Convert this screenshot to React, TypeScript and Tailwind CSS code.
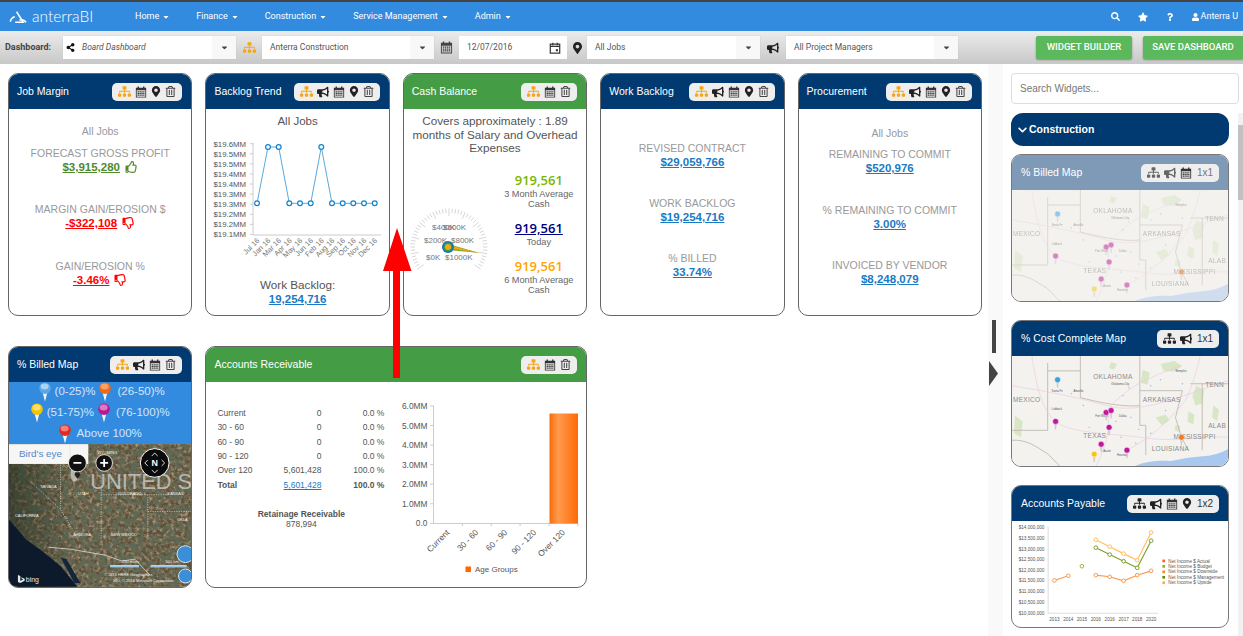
import type { ReactNode } from "react"
import {
  FaBullhorn,
  FaCaretDown,
  FaChevronDown,
  FaMapMarkerAlt,
  FaQuestion,
  FaRegThumbsDown,
  FaRegThumbsUp,
  FaRegTrashAlt,
  FaSearch,
  FaShareAlt,
  FaSitemap,
  FaStar,
  FaUser,
} from "react-icons/fa"

const navItems = ["Home", "Finance", "Construction", "Service Management", "Admin"]

function CalendarGrid({ className = "" }: { className?: string }) {
  return (
    <svg viewBox="0 0 14 14" className={className} fill="currentColor">
      <path d="M1 2h2V0.6h1.6V2h4.8V0.6H11V2h2v11.4H1zM2 5v7.4h10V5z" />
      <path d="M3 6h1.6v1.4H3zM5.2 6h1.6v1.4H5.2zM7.4 6H9v1.4H7.4zM9.6 6h1.4v1.4H9.6zM3 8h1.6v1.4H3zM5.2 8h1.6v1.4H5.2zM7.4 8H9v1.4H7.4zM9.6 8h1.4v1.4H9.6zM3 10h1.6v1.4H3zM5.2 10h1.6v1.4H5.2zM7.4 10H9v1.4H7.4zM9.6 10h1.4v1.4H9.6z" />
    </svg>
  )
}

function Select({ label, width, italic, icon }: { label: string; width: string; italic?: boolean; icon?: ReactNode }) {
  return (
    <div className={`flex h-[23px] items-center bg-white shadow-[0_0_1px_#bbb] ${width}`}>
      <div className={`flex min-w-0 flex-1 items-center gap-[7px] text-[8.5px] text-[#555] ${icon ? "pl-[3px]" : "pl-[8px]"}`}>
        {icon}
        <span className={italic ? "italic" : ""}>{label}</span>
      </div>
      <div className="flex h-full w-[24px] items-center justify-center bg-[#f8f8f8] text-[#444]">
        <FaCaretDown className="h-[9px] w-[9px]" />
      </div>
    </div>
  )
}

function ToolGroup({ tools, faded, children }: { tools: string[]; faded?: boolean; children?: ReactNode }) {
  const color = faded ? "text-[#666]" : "text-[#222]"
  return (
    <div className={`flex h-[18px] items-center gap-[4px] rounded-[5px] bg-[#eeeeee] px-[6px] ${color}`}>
      {tools.map((t) => {
        if (t === "org-orange") return <FaSitemap key={t} className="h-[13px] w-[13px] text-[#f7a516]" />
        if (t === "org") return <FaSitemap key={t} className="h-[13px] w-[13px]" />
        if (t === "horn") return <FaBullhorn key={t} className="h-[12px] w-[12px]" />
        if (t === "cal") return <CalendarGrid key={t} className="h-[12px] w-[12px] text-[#333]" />
        if (t === "pin") return <FaMapMarkerAlt key={t} className="h-[11px] w-[10px]" />
        return <FaRegTrashAlt key={t} className="h-[11px] w-[11px] text-[#444]" />
      })}
      {children}
    </div>
  )
}

function Card({
  title,
  header,
  tools,
  width,
  height,
  children,
  size,
}: {
  title: string
  header: string
  tools: string[]
  width: string
  height: string
  children: ReactNode
  size?: string
}) {
  return (
    <div className={`flex flex-col overflow-hidden rounded-[10px] border border-[#666] bg-white ${width} ${height}`}>
      <div className={`flex h-[35px] shrink-0 items-center justify-between pl-[8px] pr-[9px] text-[10.5px] text-white ${header}`}>
        <span>{title}</span>
        <ToolGroup tools={tools}>{size ? <span className="ml-[1px] text-[10px] text-[#444]">{size}</span> : null}</ToolGroup>
      </div>
      {children}
    </div>
  )
}

function Metric({ label, value, color, thumb, className = "" }: { label: string; value: string; color: string; thumb?: "up" | "down"; className?: string }) {
  return (
    <div className={`flex flex-col items-center text-center ${className}`}>
      <div className="text-[10.5px] leading-[14px] text-[#999]">{label}</div>
      <div className={`flex items-center gap-[5px] text-[11.5px] font-bold leading-[14px] ${color}`}>
        <span className="underline">{value}</span>
        {thumb === "up" && <FaRegThumbsUp className="h-[12px] w-[13px]" />}
        {thumb === "down" && <FaRegThumbsDown className="h-[12px] w-[13px]" />}
      </div>
    </div>
  )
}

function TrendChart() {
  const yLabels = ["$19.6MM", "$19.5MM", "$19.5MM", "$19.4MM", "$19.4MM", "$19.3MM", "$19.3MM", "$19.2MM", "$19.2MM", "$19.1MM"]
  const xLabels = ["Jul 16", "Jan 16", "Mar 16", "Apr 16", "May 16", "Jun 16", "Feb 16", "Aug 16", "Sep 16", "Oct 16", "Nov 16", "Dec 16"]
  const xs = [257, 268, 278.7, 289.3, 300, 310.7, 321.3, 332, 342.7, 353.3, 364, 374.7]
  const high = [1, 2, 6]
  const pts = xs.map((x, i) => ({ x, y: high.includes(i) ? 150 : 206.3 }))
  return (
    <svg viewBox="206 132 183 145" className="h-[145px] w-[183px] shrink-0" fontFamily="Liberation Sans, sans-serif">
      <path d="M253 146V238H381" fill="none" stroke="#ccc" />
      {yLabels.map((l, i) => (
        <text key={i} x="246" y={149.6 + i * 10.08} textAnchor="end" fontSize="7.8" fill="#555">
          {l}
        </text>
      ))}
      {yLabels.map((l, i) => (
        <path key={i} d={`M250 ${146.7 + i * 10.08}h3`} stroke="#ccc" />
      ))}
      <polyline points={pts.map((p) => `${p.x},${p.y}`).join(" ")} fill="none" stroke="#5aa9dc" strokeWidth="1" />
      {pts.map((p, i) => (
        <circle key={i} cx={p.x} cy={p.y} r="2.4" fill="#fff" stroke="#1284cf" strokeWidth="1.2" />
      ))}
      {xLabels.map((l, i) => (
        <text key={i} x={xs[i] + 3} y="244" textAnchor="end" fontSize="7.4" fill="#777" transform={`rotate(-45 ${xs[i] + 3} 244)`}>
          {l}
        </text>
      ))}
    </svg>
  )
}

function Gauge() {
  const ticks = []
  for (let i = 0; i <= 50; i++) {
    const a = ((-215 + (i * 250) / 50) * Math.PI) / 180
    const inner = i % 5 === 0 ? 31 : 34
    ticks.push(
      <line
        key={i}
        x1={449 + Math.cos(a) * inner}
        y1={248 + Math.sin(a) * inner}
        x2={449 + Math.cos(a) * 38.5}
        y2={248 + Math.sin(a) * 38.5}
        stroke="#ccc"
        strokeWidth="0.8"
      />,
    )
  }
  return (
    <svg viewBox="405 205 88 68" className="h-[68px] w-[88px] shrink-0" fontFamily="Liberation Sans, sans-serif" fontSize="8" fill="#777">
      {ticks}
      <text x="432" y="231">$400K</text>
      <text x="443" y="231">$600K</text>
      <text x="424" y="244">$200K</text>
      <text x="451" y="244">$800K</text>
      <text x="426" y="261">$0K</text>
      <text x="445" y="261">$1000K</text>
      <polygon points="448,245 480,254 448,251" fill="#7ea82a" />
      <polygon points="448,246 480,254 448,249" fill="#f7a516" />
      <circle cx="448" cy="248" r="6" fill="#0f75b8" />
      <circle cx="448" cy="248" r="4.4" fill="#3f9e4a" />
      <circle cx="448" cy="248" r="3" fill="#f7a516" />
    </svg>
  )
}

function Pin({ color, light, size = 1 }: { color: string; light: string; size?: number }) {
  return (
    <svg viewBox="0 0 12 20" style={{ width: 12 * size, height: 20 * size }} className="shrink-0">
      <path d="M3.6 10.5L6 19.5l2.4-9z" fill="#f4f4f4" />
      <circle cx="6" cy="6.2" r="5.8" fill={color} />
      <ellipse cx="5.6" cy="4.6" rx="4" ry="3" fill={light} />
    </svg>
  )
}

function MapPin({ x, y, color, opacity }: { x: number; y: number; color: string; opacity: number }) {
  return (
    <g opacity={opacity}>
      <path d={`M${x - 1} ${y + 2}L${x} ${y + 8}l1-6z`} fill="#ddd" stroke="#999" strokeWidth="0.3" />
      <circle cx={x} cy={y} r="3" fill={color} stroke="#fff" strokeWidth="0.5" />
    </g>
  )
}

function RoadMap({ faded }: { faded?: boolean }) {
  const o = faded ? 0.5 : 1
  const pins: [number, number, string][] = [
    [46, 24, "#3aa0e0"],
    [95, 57, "#c0189a"],
    [100, 55, "#c0189a"],
    [44, 66, "#c0189a"],
    [98, 72, "#c0189a"],
    [90, 89, "#c0189a"],
    [116, 95, "#c0189a"],
    [83, 99, "#f5c518"],
    [171, 82, "#f5791f"],
  ]
  const labels: [string, number, number][] = [
    ["OKLAHOMA", 82, 23],
    ["MEXICO", 1, 46],
    ["ARKANSAS", 132, 46],
    ["TEXAS", 72, 83],
    ["LOUISIANA", 141, 96],
    ["MISSISSIPPI", 163, 84],
    ["TENN", 195, 31],
    ["ALAB", 198, 73],
  ]
  return (
    <svg viewBox="0 0 218 111" className="h-[111px] w-full" preserveAspectRatio="none" fontFamily="Liberation Sans, sans-serif">
      <rect width="218" height="111" fill="#f4f2ee" />
      <g opacity={o}>
        <g fill="#d8e6c6">
          <path d="M150 8l14-3 8 5-9 6-10-1z" />
          <path d="M186 30l8 4-2 14-7 2-3-10z" />
          <path d="M145 62l10-3 4 6-8 5z" />
          <path d="M3 60l8 6-2 16-7-4z" />
          <path d="M132 14l7 3-2 12-7-2z" />
          <path d="M178 56l6 3-1 10-6-3z" />
          <path d="M203 50l6 4-2 12-5-4z" />
          <path d="M100 6l6 2-3 6-5-2z" />
          <path d="M165 70l5 1-1 6-5-2z" />
        </g>
        <path d="M124 111C135 106 150 105 160 106C172 104 180 102 195 101C205 100 212 97 218 94V111z" fill="#a9c8f0" />
        <g fill="none" stroke="#bdb9b0" strokeWidth="0.9">
          <path d="M36 7V75H0" />
          <path d="M36 15H69V42C85 46 110 52 129 50" />
          <path d="M129 0V50" />
          <path d="M69 0V15" />
          <path d="M129 50V70H135V100" />
          <path d="M129 35H172L165 62L171 82L178 95" />
          <path d="M180 28H218" />
          <path d="M192 28V95" />
          <path d="M0 85C15 84 25 92 35 98C42 104 45 108 48 111" />
        </g>
        <g fill="none" stroke="#e8c8e4" strokeWidth="0.6">
          <path d="M0 30C30 35 60 40 95 50C130 60 170 40 218 25" />
          <path d="M96 55C100 75 95 90 85 111" />
          <path d="M20 0C25 30 30 60 50 70C70 78 95 78 130 82C165 88 190 80 218 82" />
          <path d="M100 50C120 30 130 25 170 10" />
          <path d="M116 95C135 85 150 75 175 45C180 35 185 20 190 0" />
        </g>
        <g fill="#8fbce8">
          {[[60, 38], [72, 50], [112, 40], [120, 62], [128, 74], [140, 30], [110, 82], [155, 55], [172, 28], [78, 72], [105, 66], [125, 88], [140, 78], [118, 32], [150, 24]].map(([x, y]) => (
            <circle key={`${x}-${y}`} cx={x} cy={y} r="0.7" />
          ))}
        </g>
        {labels.map(([l, x, y]) => (
          <text key={l} x={x} y={y} fontSize="6.6" letterSpacing="0.3" fill="#8a8a8a">
            {l}
          </text>
        ))}
        <g fontSize="2.8" fill="#555">
          <text x="40" y="36">Santa Fe</text>
          <text x="62" y="36">Amarillo</text>
          <text x="40" y="55">Lubbock</text>
          <text x="84" y="62">Fort Worth</text>
          <text x="108" y="62">Dallas</text>
          <text x="106" y="101">Houston</text>
          <text x="92" y="97">Austin</text>
          <text x="100" y="29">Oklahoma City</text>
          <text x="165" y="16">Memphis</text>
        </g>
      </g>
      {pins.map(([x, y, c], i) => (
        <MapPin key={i} x={x} y={y} color={c} opacity={faded ? 0.5 : 1} />
      ))}
    </svg>
  )
}

function SatelliteMap() {
  return (
    <svg viewBox="8 444 184 144" className="h-[144px] w-full" fontFamily="Liberation Sans, sans-serif">
      <defs>
        <filter id="terrain" x="0" y="0" width="100%" height="100%">
          <feTurbulence type="fractalNoise" baseFrequency="0.28" numOctaves="3" seed="7" />
          <feColorMatrix values="0 0 0 0 0.62  0 0 0 0 0.52  0 0 0 0 0.36  1.6 0 0 0 -0.62" />
        </filter>
        <filter id="forest" x="0" y="0" width="100%" height="100%">
          <feTurbulence type="fractalNoise" baseFrequency="0.16" numOctaves="4" seed="21" />
          <feColorMatrix values="0 0 0 0 0.11  0 0 0 0 0.14  0 0 0 0 0.09  0 3.6 0 0 -1.45" />
        </filter>
        <linearGradient id="haze" x1="0" x2="1" y1="0" y2="0">
          <stop offset="0" stopColor="#1f2a1c" stopOpacity="0.6" />
          <stop offset="0.35" stopColor="#1f2a1c" stopOpacity="0" />
        </linearGradient>
      </defs>
      <rect x="8" y="444" width="184" height="144" fill="#5e5039" />
      <rect x="8" y="444" width="184" height="144" filter="url(#terrain)" />
      <rect x="8" y="444" width="184" height="144" filter="url(#forest)" />
      <rect x="8" y="444" width="184" height="144" fill="url(#haze)" />
      <polygon points="8,520 25,540 43,553 60,567 77,588 8,588" fill="#0d1a2b" />
      <polygon points="60,558 66,560 80,584 74,584" fill="#14273a" />
      <ellipse cx="74" cy="474" rx="4" ry="8" fill="#d8d8d0" opacity="0.7" />
      <g fill="none" stroke="#e8e8e0" strokeWidth="0.6" strokeDasharray="1.2 1.2">
        <path d="M60 460V510L78 540" />
        <path d="M101 478V540" />
        <path d="M101 495H170" />
        <path d="M148 495V540" />
        <path d="M148 512H192" />
        <path d="M30 482L60 510" />
      </g>
      <path d="M48 548L70 550L105 556L122 562L135 560L150 576" fill="none" stroke="#cfcfc8" strokeWidth="0.9" />
      <text x="90" y="489" fontSize="22" fill="#d8d8d8" fillOpacity="0.72">UNITED S</text>
      <g fontSize="4" fill="#f2f2f2" textAnchor="middle">
        <text x="48" y="488">NEVADA</text>
        <text x="83" y="495">UTAH</text>
        <text x="130" y="495">COLORADO</text>
        <text x="176" y="495">KANSAS</text>
        <text x="26" y="518">CALIFORNIA</text>
        <text x="82" y="537">ARIZONA</text>
        <text x="124" y="537">NEW MEXICO</text>
        <text x="107" y="454">WYOMING</text>
        <text x="183" y="522">OKLA</text>
      </g>
      <rect x="8" y="444" width="80" height="20" fill="#f6f6f4" />
      <path d="M69.5 444v20" stroke="#ddd" strokeWidth="0.6" />
      <text x="18" y="457.5" fontSize="10" fill="#5b86c9">Bird's eye</text>
      <path d="M77 468l-3 7 3 4 3-4z" fill="#222" />
      <circle cx="77" cy="463" r="9" fill="#111" stroke="#fff" strokeWidth="0.8" />
      <path d="M73 463h8" stroke="#fff" strokeWidth="1.8" />
      <circle cx="104" cy="463" r="8.4" fill="#111" stroke="#fff" strokeWidth="0.8" />
      <path d="M100 463h8M104 459v8" stroke="#fff" strokeWidth="1.8" />
      <circle cx="155" cy="463" r="14.5" fill="#0b0b0b" stroke="#fff" strokeWidth="1" />
      <text x="155" y="466.5" textAnchor="middle" fontSize="9" fontWeight="700" fill="#fff">N</text>
      <g fill="none" stroke="#ddd" strokeWidth="1">
        <path d="M152 456l3-3 3 3M152 470l3 3 3-3M148 460l-3 3 3 3M162 460l3 3-3 3" />
      </g>
      <g>
        <circle cx="186" cy="555" r="8.5" fill="#3b8fd8" stroke="#cfe3f7" strokeWidth="1" />
        <circle cx="186" cy="577" r="7" fill="#3b8fd8" stroke="#cfe3f7" strokeWidth="1" />
      </g>
      <path d="M110 567h29M151 567h36" stroke="#fff" strokeWidth="2.2" />
      <path d="M110 567h29M151 567h36" stroke="#3b8fd8" strokeWidth="0.9" />
      <g fontSize="4" fill="#f0f0f0">
        <text x="122" y="564">250 miles</text>
        <text x="166" y="564">500 km</text>
        <text x="104" y="577">© 2016 HERE   Geographics</text>
        <text x="113" y="583">SIO, © 2016 Microsoft Corporation</text>
      </g>
      <text x="25" y="583" fontSize="7" fill="#e8e8e8">bing</text>
      <path d="M17 576l2.4 1v5l3-1.6-1.8-.8-.4-1.4 3.6 1.6v2l-4.4 2.4-2.4-1.2z" fill="#e8e8e8" />
    </svg>
  )
}

function ReceivableChart() {
  const yLabels = ["6.0MM", "5.0MM", "4.0MM", "3.0MM", "2.0MM", "1.0MM", "0.0"]
  const xLabels = ["Current", "30 - 60", "60 - 90", "90 - 120", "Over 120"]
  return (
    <svg viewBox="396 392 190 190" className="h-[190px] w-[190px] shrink-0" fontFamily="Liberation Sans, sans-serif" fontSize="8.4" fill="#555">
      <defs>
        <linearGradient id="bar" x1="0" x2="1" y1="0" y2="0">
          <stop offset="0" stopColor="#f76b0a" />
          <stop offset="0.3" stopColor="#ff9a4d" />
          <stop offset="1" stopColor="#ff6a06" />
        </linearGradient>
      </defs>
      <path d="M433.5 406V523.5H578" fill="none" stroke="#ccc" />
      {yLabels.map((l, i) => (
        <g key={l}>
          <text x="427.5" y={409 + i * 19.55} textAnchor="end">{l}</text>
          <path d={`M430 ${406 + i * 19.55}h4`} stroke="#ccc" />
        </g>
      ))}
      {[462.4, 491.3, 520.1, 549, 578].map((x) => (
        <path key={x} d={`M${x} 523v3`} stroke="#ccc" />
      ))}
      <rect x="549.5" y="413.5" width="28.5" height="110" fill="url(#bar)" />
      {xLabels.map((l, i) => (
        <text key={l} x={450 + i * 28.9} y="533" textAnchor="end" transform={`rotate(-45 ${450 + i * 28.9} 533)`}>{l}</text>
      ))}
      <rect x="465.5" y="566.5" width="5.5" height="5.5" fill="#ff6600" />
      <text x="475" y="572" fontSize="8">Age Groups</text>
    </svg>
  )
}

function PayableChart() {
  const yLabels = ["$14,000,000", "$13,500,000", "$13,000,000", "$12,500,000", "$12,000,000", "$11,500,000", "$11,000,000", "$10,500,000", "$10,000,000"]
  const yPos = [650, 682, 715, 747, 780, 811, 844, 876, 908]
  const years = ["2013", "2014", "2015", "2016", "2016", "2017", "2018", "2020"]
  const xPos = [222, 264, 305, 347, 389, 431, 472, 514]
  const series = [
    { color: "#f79a4d", pts: [[222, 811], [264, 797]] },
    { color: "#f79a4d", pts: [[347, 795], [389, 800], [431, 812], [472, 795], [514, 782]] },
    { color: "#7e9f2c", pts: [[347, 712], [389, 733], [431, 753], [472, 773], [514, 691]] },
    { color: "#9ab83a", pts: [[305, 768]] },
    { color: "#ffbe5c", pts: [[347, 688], [389, 709], [431, 730], [472, 750], [514, 666]] },
  ]
  const legend = [
    ["Net Income $ Actual", "#f4661c"],
    ["Net Income $ Budget", "#8fb12e"],
    ["Net Income $ Downside", "#f58a1f"],
    ["Net Income $ Management", "#5f8a12"],
    ["Net Income $ Upside", "#fbb034"],
  ]
  return (
    <svg viewBox="94 632 652 316" className="h-[105px] w-full" fontFamily="Liberation Sans, sans-serif">
      <path d="M203 648V910H535" fill="none" stroke="#ddd" strokeWidth="3" />
      {yLabels.map((l, i) => (
        <text key={l} x="192" y={yPos[i] + 6} textAnchor="end" fontSize="14" fill="#555">{l}</text>
      ))}
      {years.map((y, i) => (
        <text key={i} x={xPos[i]} y="932" textAnchor="middle" fontSize="14" fill="#555">{y}</text>
      ))}
      {series.map((s, i) => (
        <g key={i}>
          <polyline points={s.pts.map((p) => p.join(",")).join(" ")} fill="none" stroke={s.color} strokeWidth="3.4" />
          {s.pts.map((p, j) => (
            <circle key={j} cx={p[0]} cy={p[1]} r="5.5" fill="#fff" stroke={s.color} strokeWidth="3" />
          ))}
        </g>
      ))}
      {legend.map(([l, c], i) => (
        <g key={l}>
          <rect x="548" y={748 + i * 16.5} width="8" height="8" fill={c} />
          <text x="566" y={757 + i * 16.5} fontSize="14" fill="#555">{l}</text>
        </g>
      ))}
    </svg>
  )
}

function SideCard({ title, faded, tools, size, children, height }: { title: string; faded?: boolean; tools: string[]; size: string; children: ReactNode; height: string }) {
  return (
    <div className={`flex w-[218px] flex-col overflow-hidden rounded-[10px] border border-[#777] bg-white ${height}`}>
      <div className={`flex h-[35px] shrink-0 items-center justify-between pl-[9px] pr-[9px] text-[10.5px] text-white ${faded ? "bg-[#7f9ab7]" : "bg-[#003a70]"}`}>
        <span>{title}</span>
        <ToolGroup tools={tools} faded={faded}>
          <span className={`ml-[1px] text-[10px] ${faded ? "text-[#777]" : "text-[#333]"}`}>{size}</span>
        </ToolGroup>
      </div>
      {children}
    </div>
  )
}

export default function App() {
  return (
    <div className="relative flex h-[636px] w-[1243px] flex-col overflow-hidden bg-white font-['Liberation_Sans',sans-serif]">
      <div className="h-[2px] shrink-0 bg-[#444]" />
      <header className="flex h-[29px] shrink-0 items-center bg-[#338be0] font-['Roboto',sans-serif] text-white">
        <div className="flex w-[135px] items-center gap-[4px] pl-[9px]">
          <svg viewBox="0 0 20 14" className="h-[14px] w-[19px]" fill="none" stroke="#fff" strokeWidth="1.6">
            <path d="M1.5 12C1.5 9 4 7.5 6 6.5" />
            <path d="M8 1.5L15 12.5H6.5" />
            <path d="M18 12.5C15.5 9 13 9.5 11 10.5" />
          </svg>
          <span className="font-['Lato',sans-serif] text-[15.5px] font-light leading-none">anterraBI</span>
        </div>
        <nav className="flex gap-[26px] text-[9px]">
          {navItems.map((n) => (
            <span key={n} className="flex items-center gap-[3px]">
              {n}
              <FaCaretDown className="h-[8px] w-[8px]" />
            </span>
          ))}
        </nav>
        <div className="ml-auto flex items-center gap-[18px] pr-[5px] text-[9px]">
          <FaSearch className="h-[9px] w-[9px]" />
          <FaStar className="h-[10px] w-[10px]" />
          <FaQuestion className="h-[8px] w-[8px]" />
          <span className="flex items-center gap-[2px]">
            <FaUser className="h-[8px] w-[7px]" />
            Anterra U
          </span>
        </div>
      </header>
      <div className="flex h-[33px] shrink-0 items-center bg-gradient-to-b from-[#ececec] to-[#c8c8c8] font-['Roboto',sans-serif]">
        <span className="w-[63px] pl-[5px] text-[9px] font-bold text-[#444]">Dashboard:</span>
        <Select label="Board Dashboard" width="w-[173px]" italic icon={<FaShareAlt className="h-[9px] w-[9px] text-[#111]" />} />
        <span className="flex w-[26px] justify-center">
          <FaSitemap className="h-[13px] w-[13px] text-[#f7a516]" />
        </span>
        <Select label="Anterra Construction" width="w-[172px]" />
        <span className="flex w-[25px] justify-center">
          <CalendarGrid className="h-[13px] w-[13px] text-[#444]" />
        </span>
        <div className="flex h-[23px] w-[108px] items-center justify-between bg-white pl-[8px] pr-[6px] text-[8.5px] text-[#555]">
          12/07/2016
          <svg viewBox="0 0 14 14" className="h-[12px] w-[12px]" fill="none" stroke="#333" strokeWidth="1.4">
            <rect x="1.5" y="2.5" width="11" height="10.5" />
            <path d="M1.5 5.2h11M4.4 0.8v3M9.6 0.8v3" />
            <rect x="8" y="8.4" width="2.4" height="2.4" fill="#333" stroke="none" />
          </svg>
        </div>
        <span className="flex w-[20px] justify-center">
          <FaMapMarkerAlt className="h-[12px] w-[9px] text-[#222]" />
        </span>
        <Select label="All Jobs" width="w-[173px]" />
        <span className="flex w-[26px] justify-center">
          <FaBullhorn className="h-[12px] w-[12px] text-[#222]" />
        </span>
        <Select label="All Project Managers" width="w-[172px]" />
        <div className="ml-[78px] flex h-[23px] w-[96px] items-center justify-center rounded-[2px] bg-[#5cb85c] text-[9.5px] font-medium text-white shadow-[0_1px_2px_#888]">
          WIDGET BUILDER
        </div>
        <div className="ml-[11px] flex h-[23px] w-[100px] items-center justify-center rounded-l-[2px] bg-[#5cb85c] text-[9.5px] font-medium text-white shadow-[0_1px_2px_#888]">
          SAVE DASHBOARD
        </div>
      </div>

      <div className="flex min-h-0 flex-1">
        <main className="flex w-[988px] shrink-0 flex-col gap-[30px] pl-2 pt-[9px]">
          <div className="flex gap-[13px]">
            <Card title="Job Margin" header="bg-[#003a70]" tools={["org-orange", "cal", "pin", "trash"]} width="w-[184.4px]" height="h-[243px]">
              <div className="flex flex-col items-center pt-[15px]">
                <div className="text-[10.5px] leading-[14px] text-[#999]">All Jobs</div>
                <Metric className="mt-[8px]" label="FORECAST GROSS PROFIT" value="$3,915,280" color="text-[#4f8a2b]" thumb="up" />
                <Metric className="mt-[28px]" label="MARGIN GAIN/EROSION $" value="-$322,108" color="text-[#ff0000]" thumb="down" />
                <Metric className="mt-[29px]" label="GAIN/EROSION %" value="-3.46%" color="text-[#ff0000]" thumb="down" />
              </div>
            </Card>
            <Card title="Backlog Trend" header="bg-[#003a70]" tools={["org-orange", "horn", "cal", "pin", "trash"]} width="w-[184.4px]" height="h-[243px]">
              <div className="flex flex-col items-center pt-[4px]">
                <div className="text-[11.5px] leading-[16px] text-[#555]">All Jobs</div>
                <TrendChart />
                <div className="mt-[3px] text-[11.7px] leading-[15px] text-[#555]">Work Backlog:</div>
                <div className="text-[11.5px] font-bold leading-[15px] text-[#1a7ac4] underline">19,254,716</div>
              </div>
            </Card>
            <Card title="Cash Balance" header="bg-[#449d44]" tools={["org-orange", "cal", "trash"]} width="w-[184.4px]" height="h-[243px]">
              <div className="px-[4px] pt-[5px] text-center text-[11.7px] leading-[13.5px] text-[#555]">Covers approximately : 1.89 months of Salary and Overhead Expenses</div>
              <div className="mt-[16px] flex">
                <div className="pl-[1px] pt-[33px]">
                  <Gauge />
                </div>
                <div className="flex w-[92px] flex-col items-center text-center text-[9.2px] leading-[10.5px] text-[#666]">
                  <div className="font-['Open_Sans',sans-serif] text-[13px] font-semibold leading-[18px] text-[#7ab800]">919,561</div>
                  <div>3 Month Average Cash</div>
                  <div className="mt-[9px] font-['Open_Sans',sans-serif] text-[13px] font-semibold leading-[18px] text-[#000080] underline">919,561</div>
                  <div>Today</div>
                  <div className="mt-[9.5px] font-['Open_Sans',sans-serif] text-[13px] font-semibold leading-[18px] text-[#ffa500]">919,561</div>
                  <div>6 Month Average Cash</div>
                </div>
              </div>
            </Card>
            <Card title="Work Backlog" header="bg-[#003a70]" tools={["org-orange", "horn", "cal", "pin", "trash"]} width="w-[184.4px]" height="h-[243px]">
              <div className="flex flex-col items-center gap-[27px] pt-[32px]">
                <Metric label="REVISED CONTRACT" value="$29,059,766" color="text-[#1a7ac4]" />
                <Metric label="WORK BACKLOG" value="$19,254,716" color="text-[#1a7ac4]" />
                <Metric label="% BILLED" value="33.74%" color="text-[#1a7ac4]" />
              </div>
            </Card>
            <Card title="Procurement" header="bg-[#003a70]" tools={["org-orange", "horn", "cal", "pin", "trash"]} width="w-[184.4px]" height="h-[243px]">
              <div className="flex flex-col items-center pt-[17px]">
                <div className="text-[10.5px] leading-[14px] text-[#999]">All Jobs</div>
                <Metric className="mt-[7px]" label="REMAINING TO COMMIT" value="$520,976" color="text-[#1a7ac4]" />
                <Metric className="mt-[28px]" label="% REMAINING TO COMMIT" value="3.00%" color="text-[#1a7ac4]" />
                <Metric className="mt-[27px]" label="INVOICED BY VENDOR" value="$8,248,079" color="text-[#1a7ac4]" />
              </div>
            </Card>
          </div>
          <div className="flex gap-[13px]">
            <Card title="% Billed Map" header="bg-[#003a70]" tools={["org-orange", "horn", "cal", "trash"]} width="w-[184.4px]" height="h-[242px]">
              <div className="flex h-[62px] shrink-0 flex-col items-center justify-center gap-[1px] bg-[#338be0] text-[11.5px] text-[#d5e5f8]">
                <div className="ml-[3px] flex h-[20px] items-center gap-[4px]">
                  <Pin color="#5aa9e6" light="#a8d4f5" />
                  <span>(0-25)%</span>
                  <Pin color="#ef6a1a" light="#f9a263" />
                  <span className="ml-[2px]">(26-50)%</span>
                </div>
                <div className="flex h-[20px] items-center gap-[4px]">
                  <Pin color="#f6c200" light="#ffe066" />
                  <span>(51-75)%</span>
                  <Pin color="#b8198f" light="#e277c8" />
                  <span className="ml-[2px]">(76-100)%</span>
                </div>
                <div className="flex h-[20px] items-center gap-[4px]">
                  <Pin color="#e02b1e" light="#f5806f" />
                  <span className="ml-[2px]">Above 100%</span>
                </div>
              </div>
              <SatelliteMap />
            </Card>
            <Card title="Accounts Receivable" header="bg-[#449d44]" tools={["org-orange", "cal", "trash"]} width="w-[382px]" height="h-[242px]">
              <div className="flex">
                <div className="w-[189.6px] shrink-0 pl-[11px] pt-[24px] text-[8.5px] text-[#555]">
                  <table className="w-[167px] border-collapse">
                    <tbody>
                      {[
                        ["Current", "0", "0.0 %"],
                        ["30 - 60", "0", "0.0 %"],
                        ["60 - 90", "0", "0.0 %"],
                        ["90 - 120", "0", "0.0 %"],
                        ["Over 120", "5,601,428", "100.0 %"],
                      ].map(([a, b, c]) => (
                        <tr key={a} className="h-[14.3px] leading-[14px]">
                          <td className="w-[60px] p-0">{a}</td>
                          <td className="w-[44px] p-0 text-right">{b}</td>
                          <td className="p-0 text-right">{c}</td>
                        </tr>
                      ))}
                      <tr className="h-[14.3px] font-bold leading-[14px]">
                        <td className="p-0">Total</td>
                        <td className="p-0 text-right font-normal text-[#1a7ac4] underline">5,601,428</td>
                        <td className="p-0 text-right">100.0 %</td>
                      </tr>
                    </tbody>
                  </table>
                  <div className="mt-[17px] w-[168px] text-center leading-[10px]">
                    <div className="font-bold">Retainage Receivable</div>
                    <div>878,994</div>
                  </div>
                </div>
                <div className="mt-[10px]">
                  <ReceivableChart />
                </div>
              </div>
            </Card>
          </div>
        </main>

        <div className="flex w-[15px] shrink-0 flex-col bg-[#f9f9f9] pt-[256px]">
          <div className="ml-[4px] h-[33px] w-[4px] bg-[#444]" />
          <svg viewBox="0 0 9 25" className="ml-[1px] mt-[8px] h-[25px] w-[9px]">
            <polygon points="0,0 9,12.5 0,25" fill="#444" />
          </svg>
        </div>

        <aside className="flex min-w-0 flex-1 flex-col pl-2 pt-[9px]">
          <input
            readOnly
            placeholder="Search Widgets..."
            className="h-[31px] w-[228px] shrink-0 rounded-[4px] border border-[#ddd] bg-white px-[8px] text-[10px] outline-none placeholder:text-[#777]"
          />
          <div className="mt-[9px] flex min-h-0 flex-1">
            <div className="flex w-[218px] shrink-0 flex-col">
              <div className="flex h-[33px] items-center gap-[1px] rounded-[12px] bg-[#003a70] pl-[6px] text-[10.5px] font-bold text-white">
                <FaChevronDown className="h-[10px] w-[11px]" />
                Construction
              </div>
              <div className="mt-[8px] flex flex-col gap-[18px]">
                <SideCard title="% Billed Map" faded tools={["org", "horn", "cal"]} size="1x1" height="h-[148px]">
                  <RoadMap faded />
                </SideCard>
                <SideCard title="% Cost Complete Map" tools={["org", "horn"]} size="1x1" height="h-[147px]">
                  <RoadMap />
                </SideCard>
                <SideCard title="Accounts Payable" tools={["org", "horn", "cal", "pin"]} size="1x2" height="h-[143px]">
                  <PayableChart />
                </SideCard>
              </div>
            </div>
            <div className="ml-auto w-[5px] bg-[#f1f1f1] pt-[12px]">
              <div className="h-[75px] w-full bg-[#c1c1c1]" />
            </div>
          </div>
        </aside>
      </div>

      <svg viewBox="0 0 30 152" className="absolute left-[383px] top-[228px] h-[152px] w-[30px]">
        <polygon points="14,0 28.5,43 17,43 17,150 10,150 10,43 0,43" fill="#ff0000" />
      </svg>
    </div>
  )
}
